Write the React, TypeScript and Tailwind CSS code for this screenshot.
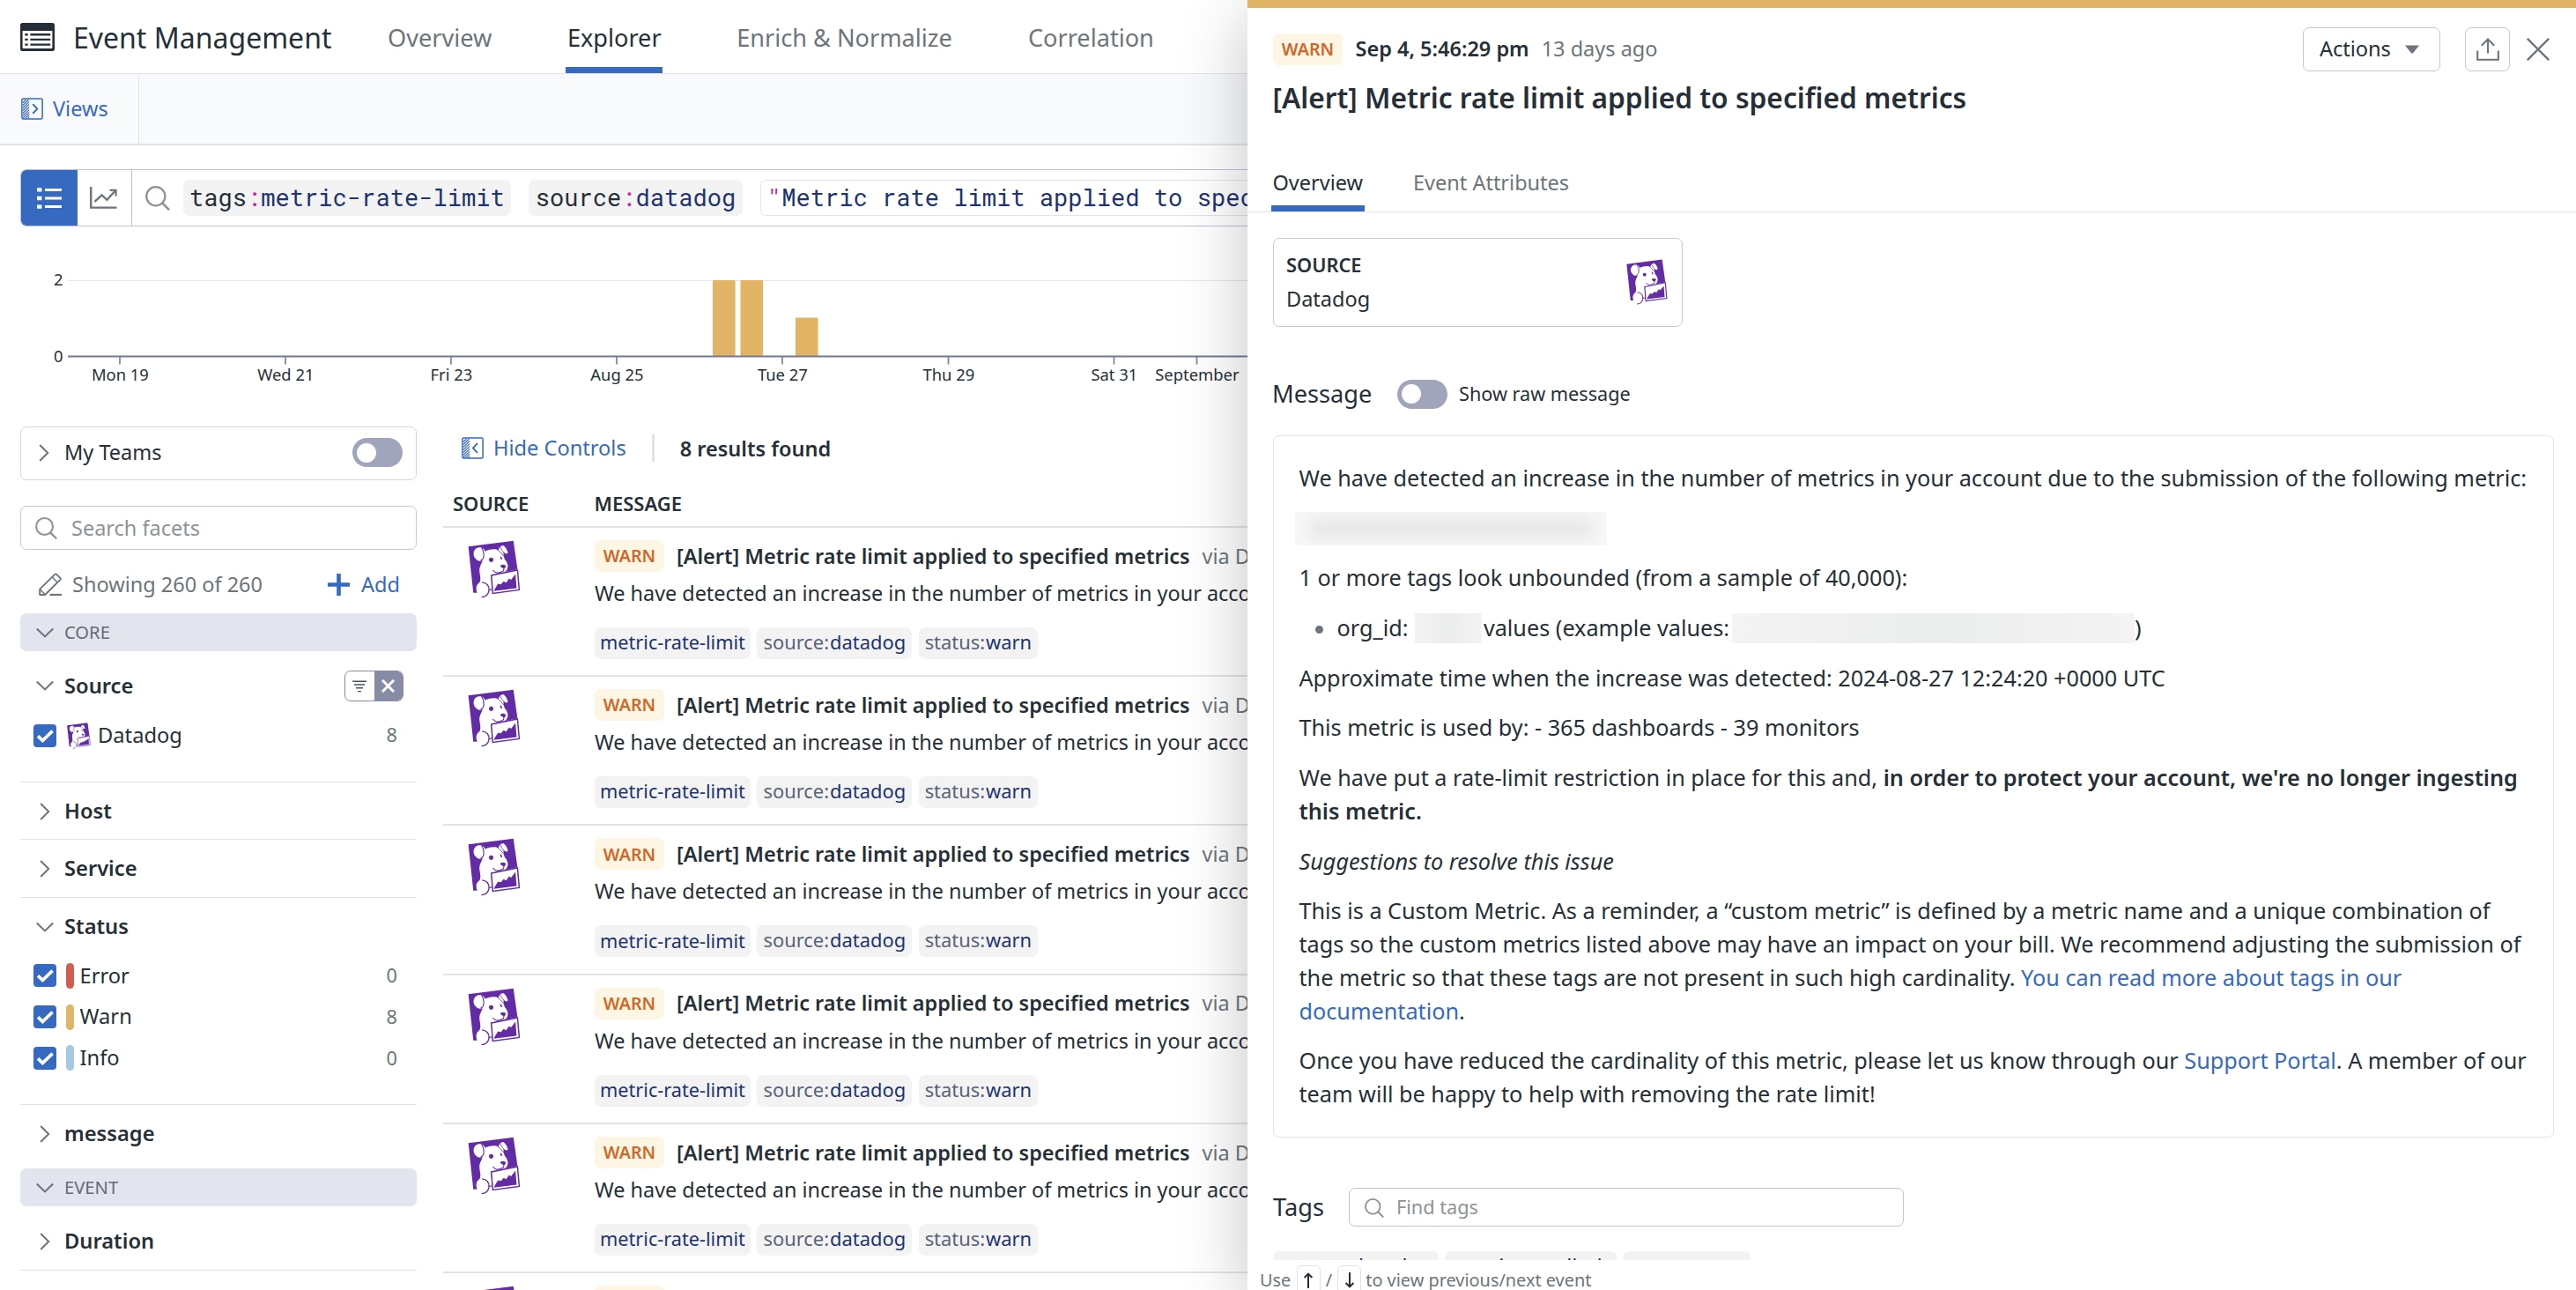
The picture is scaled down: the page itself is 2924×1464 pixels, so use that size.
import React from "react";

type IconProps = { className?: string };

const ListWindowIcon = () => (
  <svg className="h-[32px] w-[39px] shrink-0" viewBox="0 0 39 32">
    <path fillRule="evenodd" fill="#262f38" d="M2.5 0H36.5Q39 0 39 2.5V29.5Q39 32 36.5 32H2.5Q0 32 0 29.5V2.5Q0 0 2.5 0ZM2.6 9V28Q2.6 29 3.6 29H35.4Q36.4 29 36.4 28V9Z" />
    <path d="M5.3 13.2h3.4M5.3 18.9h3.4M5.3 24.6h3.4M11.4 13.2h22.8M11.4 18.9h22.8M11.4 24.6h22.8" stroke="#262f38" strokeWidth="2.4" />
  </svg>
);

const PanelIcon = ({ dir }: { dir: "left" | "right" }) => (
  <svg className="h-[25px] w-[25px] shrink-0" viewBox="0 0 25 25" fill="none" stroke="#356ac0">
    <rect x="0.9" y="0.9" width="23.2" height="23.2" rx="1.6" strokeWidth="1.5" />
    <path d="M2 5.5L5.5 2M2 8.5L8.5 2M2 11.5L9.2 4.3M2 14.5L9.2 7.3M2 17.5L9.2 10.3M2 20.5L9.2 13.3M2 23.2L9.2 16.3M4.5 23.3L9.2 19M7.3 23.3L9.2 21.6" strokeWidth="1.1" />
    <path d={dir === "right" ? "M13.2 7.2L18.3 12.5L13.2 17.8" : "M18 7.2L12.9 12.5L18 17.8"} strokeWidth="1.9" />
  </svg>
);

const SearchIcon = ({ className }: IconProps) => (
  <svg className={className} viewBox="0 0 28 28" fill="none" stroke="#8d9398">
    <circle cx="11.8" cy="11.8" r="10.6" strokeWidth="2.3" />
    <path d="M19.2 19.4L27 27.2" strokeWidth="2.6" />
  </svg>
);

const ChevronRight = () => (
  <svg className="h-5 w-5 shrink-0" viewBox="0 0 20 20" fill="none" stroke="#6c757c" strokeWidth="2">
    <path d="M5.2 1L14.2 10L5.2 19" />
  </svg>
);

const ChevronDown = () => (
  <svg className="h-5 w-5 shrink-0" viewBox="0 0 20 20" fill="none" stroke="#6c757c" strokeWidth="2.1">
    <path d="M0.8 5.4L10 14.4L19.2 5.4" />
  </svg>
);

const PencilIcon = () => (
  <svg className="h-[27px] w-[27px] shrink-0" viewBox="0 0 27 27" fill="none" stroke="#6c757c" strokeWidth="1.9" strokeLinejoin="round">
    <path d="M1.2 25V18.6L18.2 1.9Q19.2 1 20.2 1.9L24.3 5.9Q25.2 6.9 24.3 7.9L7.2 25Z" />
    <path d="M15.2 5L21.2 11M1.6 19L7 24.6" strokeWidth="1.5" />
    <path d="M12.5 25H26" strokeWidth="2.2" />
  </svg>
);

const DogLogo = ({ className }: IconProps) => (
  <svg className={className} viewBox="34 36 180 200">
    <path fill="#632ca6" d="M35 58L190 38L204 137L160 146L112 155L118 200L108 216L52 217Z" />
    <path fill="#fff" d="M53 82C54 67 65 59 78 61C86 63 91 69 93 75C99 69 104 72 108 68C113 71 118 65 123 68C129 65 134 69 138 72C140 61 147 55 155 54C164 59 170 72 171 80C168 85 162 83 156 77C155 84 157 94 160 102C167 110 171 118 171 127C170 139 163 146 151 148L112 156L118 205L108 218L66 218C59 203 62 190 74 181C80 168 73 152 73 138C73 130 77 122 80 116L84 106C75 110 67 108 62 102C55 96 53 90 53 82Z" />
    <path fill="none" stroke="#632ca6" strokeWidth="3.4" d="M80 62C87 69 88 78 88 90C88 98 85 103 77 106" />
    <path fill="none" stroke="#632ca6" strokeWidth="2.6" d="M138 72C145 76 152 86 158 92M146 61C148 68 151 74 157 78" />
    <path fill="#632ca6" d="M107 99C111 94 120 96 121 102C122 109 116 113 111 111C106 109 104 104 107 99Z" />
    <path fill="#632ca6" d="M144 91C149 92 152 98 151 103C147 104 144 98 144 91Z" />
    <path fill="#632ca6" d="M144 124Q153 118 162 122Q166 129 158 134Q150 135 144 124Z" />
    <path fill="none" stroke="#632ca6" strokeWidth="3.2" d="M157 133Q158 143 149 145Q140 150 131 148Q123 145 119 139" />
    <path fill="#fff" stroke="#632ca6" strokeWidth="4.4" d="M114 157L204 139L210 207L119 219Z" />
    <path fill="#632ca6" d="M123 211L127 202L137 186L147 188L156 178L165 182L175 168L182 172L197 153L201 201Z" />
    <path fill="#fff" d="M64 200C64 186 76 181 88 182C100 184 108 200 103 214C99 226 92 231 82 231C72 226 64 214 64 200Z" />
    <path fill="none" stroke="#632ca6" strokeWidth="4" d="M82 181C98 182 108 194 106 209C103 225 94 232 80 232" />
    <path fill="none" stroke="#632ca6" strokeWidth="3.6" d="M105 207L118 205" />
  </svg>
);

const WarnBadge = () => (
  <span className="flex h-9 w-[79px] shrink-0 items-center justify-center rounded-[7px] bg-[#fdf6e4] text-[19.7px] font-semibold text-[#cf6827]">WARN</span>
);

const Toggle = () => (
  <span className="flex h-[33px] w-[57px] shrink-0 items-center rounded-full bg-[#a0a5bb] pl-[5px]">
    <span className="h-[22px] w-[22px] rounded-full bg-white" />
  </span>
);

const Checkbox = () => (
  <span className="flex h-[26px] w-[26px] shrink-0 items-center justify-center rounded-[4px] bg-[#356ac0]">
    <svg className="h-[26px] w-[26px]" viewBox="0 0 26 26" fill="none" stroke="#fff" strokeWidth="3.6">
      <path d="M5 13.4L10.4 18.4L21.6 7.6" />
    </svg>
  </span>
);

const ticks: [number, string][] = [
  [136, "Mon 19"],
  [324, "Wed 21"],
  [512, "Fri 23"],
  [700, "Aug 25"],
  [888, "Tue 27"],
  [1076.5, "Thu 29"],
  [1264.5, "Sat 31"],
  [1358.5, "September"],
];

const bars: [number, number][] = [
  [809, 86],
  [840.5, 86],
  [903, 43.5],
];

function Timeline() {
  return (
    <svg className="mt-[43px] h-[184px] w-[1460px]" viewBox="0 300 1460 184" fontSize="18.4" fill="#262f38">
      <path d="M77 318.5H1460" stroke="#e4e5e8" strokeWidth="1.2" />
      <text x="71.5" y="324.3" textAnchor="end">2</text>
      <text x="71.5" y="410.8" textAnchor="end">0</text>
      {bars.map(([x, h]) => (
        <rect key={x} x={x} y={404 - h} width="25.6" height={h} fill="#e2b566" />
      ))}
      <path d="M77 404.5H1460" stroke="#737995" strokeWidth="2.2" />
      {ticks.map(([x, label]) => (
        <g key={label}>
          <path d={`M${x} 405V413.5`} stroke="#8388a2" strokeWidth="1.8" />
          <text x={x + 0.4} y="432.3" textAnchor="middle">{label}</text>
        </g>
      ))}
    </svg>
  );
}

const GroupBar = ({ label }: { label: string }) => (
  <div className="flex h-[43px] items-center rounded-[7px] bg-[#e2e5ed] pl-[18px] text-[20.2px] text-[#636b73]">
    <ChevronDown />
    <span className="ml-3">{label}</span>
  </div>
);

const Facet = ({ label, open, className }: { label: string; open?: boolean; className: string }) => (
  <div className={`flex items-center pl-[18px] text-[23.7px] font-semibold ${className}`}>
    {open ? <ChevronDown /> : <ChevronRight />}
    <span className="ml-3">{label}</span>
  </div>
);

const statuses: [string, string, number][] = [
  ["Error", "bg-[#d15f50]", 0],
  ["Warn", "bg-[#e2b566]", 8],
  ["Info", "bg-[#a5c9e1]", 0],
];

function Sidebar() {
  return (
    <aside className="ml-[23px] w-[450px] shrink-0">
      <div className="flex h-[61px] items-center rounded-[7px] border border-[#d3d5e6] pb-[2px] pl-4">
        <ChevronRight />
        <span className="ml-[13px] flex-1 text-[23.5px]">My Teams</span>
        <span className="mr-[15px]"><Toggle /></span>
      </div>
      <div className="mt-[29px] flex h-[50px] items-center rounded-[7px] border border-[#c5c9dc] pt-px pl-4">
        <SearchIcon className="h-[25px] w-[25px] shrink-0" />
        <span className="ml-4 text-[23.5px] text-[#8d9398]">Search facets</span>
      </div>
      <div className="flex h-[72px] items-center pt-[7px] text-[23.5px]">
        <span className="ml-[21px]"><PencilIcon /></span>
        <span className="ml-[11px] flex-1 text-[#6c757c]">Showing 260 of 260</span>
        <svg className="h-[25px] w-[25px]" viewBox="0 0 25 25" stroke="#356ac0" strokeWidth="4.6">
          <path d="M12.5 0V25M0 12.5H25" />
        </svg>
        <span className="mr-[19px] ml-[13px] text-[#356ac0]">Add</span>
      </div>
      <GroupBar label="CORE" />
      <div className="flex h-[79px] items-center">
        <Facet label="Source" open className="flex-1" />
        <div className="mr-[15px] flex h-[35px] w-[67px] overflow-hidden rounded-[7px] border border-[#878ba5]">
          <span className="flex flex-1 items-center justify-center">
            <svg className="h-4 w-4" viewBox="0 0 16 16" stroke="#4a535c" strokeWidth="1.4">
              <path d="M0 2.2H16M2 6H14M4 9.8H12M6 13.6H10" />
            </svg>
          </span>
          <span className="flex flex-1 items-center justify-center bg-[#878ba5]">
            <svg className="h-[15px] w-[15px]" viewBox="0 0 15 15" stroke="#fff" strokeWidth="3">
              <path d="M1 1L14 14M14 1L1 14" />
            </svg>
          </span>
        </div>
      </div>
      <div className="flex h-[33px] items-center pl-[15px]">
        <Checkbox />
        <DogLogo className="ml-3 h-[30px] w-[27px]" />
        <span className="ml-[8px] flex-1 text-[23.7px]">Datadog</span>
        <span className="mr-[22px] text-[21.7px] text-[#6c757c]">8</span>
      </div>
      <div className="mt-[36px] border-t border-[#e1e3ea]" />
      <Facet label="Host" className="h-[65px] border-b border-[#e1e3ea] pt-px" />
      <Facet label="Service" className="h-[66px] border-b border-[#e1e3ea]" />
      <Facet label="Status" open className="h-[65px]" />
      {statuses.map(([label, color, count]) => (
        <div key={label} className="flex h-[46.8px] items-center pl-[15px]">
          <Checkbox />
          <span className={`ml-[11px] h-[29px] w-[9px] rounded-full ${color}`} />
          <span className="ml-[6.5px] flex-1 text-[23.7px]">{label}</span>
          <span className="mr-[22px] text-[21.7px] text-[#6c757c]">{count}</span>
        </div>
      ))}
      <div className="mt-[28.7px] border-t border-[#e1e3ea]" />
      <Facet label="message" className="mb-2 h-[64px] pt-px" />
      <GroupBar label="EVENT" />
      <Facet label="Duration" className="h-[73px] border-b border-[#e1e3ea] pt-[7px]" />
    </aside>
  );
}

const Chip = ({ k, v, className }: { k?: string; v: string; className: string }) => (
  <span className={`flex items-center rounded-[7px] bg-[#f3f3f4] text-[#1d3372] ${className}`}>
    {k && <span className="mr-px text-[#596278]">{k}:</span>}
    <span>{v}</span>
  </span>
);

const EventRow = () => (
  <div className="flex h-[169.2px] shrink-0 border-b-2 border-[#e1e3ea] pt-[14px]">
    <div className="w-[172px] shrink-0 pl-7">
      <DogLogo className="h-[66px] w-[60px]" />
    </div>
    <div className="text-[23.45px] whitespace-nowrap">
      <div className="flex h-9 items-center">
        <WarnBadge />
        <span className="ml-[14px] pt-px font-semibold">[Alert] Metric rate limit applied to specified metrics</span>
        <span className="ml-[14px] pt-px text-[#6c757c]">via Datadog</span>
      </div>
      <div className="mt-[6px] text-[23.4px] leading-9">We have detected an increase in the number of metrics in your account due to the submission</div>
      <div className="mt-[21px] flex gap-[7.5px] text-[21.9px]">
        <Chip v="metric-rate-limit" className="h-9 px-[6px] pb-px text-[21.7px]" />
        <Chip k="source" v="datadog" className="h-9 px-[7px] pb-px" />
        <Chip k="status" v="warn" className="h-9 px-[7px] pb-px" />
      </div>
    </div>
  </div>
);

function Results() {
  return (
    <section className="ml-[30px] flex-1">
      <div className="flex h-[49px] items-center text-[23.5px]">
        <span className="ml-[21px]"><PanelIcon dir="left" /></span>
        <span className="ml-[11px] text-[23.6px] text-[#356ac0]">Hide Controls</span>
        <span className="ml-[29px] h-[31px] w-[3px] bg-[#e1e3ea]" />
        <span className="ml-[29px] pt-[2px] font-semibold">8 results found</span>
      </div>
      <div className="flex h-[66px] items-center border-b-2 border-[#e1e3ea] pt-[13px] text-[22px] font-semibold">
        <span className="w-[171.5px] pl-[11px]">SOURCE</span>
        <span>MESSAGE</span>
      </div>
      {[0, 1, 2, 3, 4, 5].map((i) => (
        <EventRow key={i} />
      ))}
    </section>
  );
}

function Explorer() {
  return (
    <main className="h-[1464px] w-[2924px] overflow-hidden">
      <header className="flex h-[84px] items-center border-b border-[#e1e3ee] pl-[23px]">
        <ListWindowIcon />
        <h1 className="ml-[21px] pt-[2px] text-[32px]">Event Management</h1>
        <nav className="ml-[63.5px] flex h-[83px] text-[27.15px] text-[#6c757c]">
          <span className="flex items-center pt-[3px]">Overview</span>
          <span className="ml-[84px] flex items-center border-b-[7px] border-[#356ac0] px-[1.5px] pt-[10px] text-[#262f38]">Explorer</span>
          <span className="ml-[84px] flex items-center pt-[3px]">Enrich &amp; Normalize</span>
          <span className="ml-[86px] flex items-center pt-[3px]">Correlation</span>
        </nav>
      </header>
      <div className="h-[81px] border-b-2 border-[#e1e3ea] bg-[#f9fafc]">
        <div className="flex h-[79px] w-[157.5px] items-center border-r-[1.5px] border-[#dfe2ec] pl-6 text-[23.5px] text-[#356ac0]">
          <PanelIcon dir="right" />
          <span className="ml-[11px]">Views</span>
        </div>
      </div>
      <div className="mt-[27px] ml-[23px] flex h-[65px] w-[2877px] items-center overflow-hidden rounded-[7px] border border-[#bcc1d9]">
        <span className="-my-px -ml-px flex h-[65px] w-[65px] items-center justify-center bg-[#356ac0]">
          <svg className="h-[24px] w-[28px]" viewBox="0 0 28 24" stroke="#fff" fill="none">
            <path d="M0 2.4H5.4M0 12H5.4M0 21.6H5.4" strokeWidth="4.4" />
            <path d="M9 2.4H28M9 12H28M9 21.6H28" strokeWidth="3" />
          </svg>
        </span>
        <span className="flex h-full w-[62px] items-center justify-center border-r border-[#bcc1d9] pr-[2px]">
          <svg className="mt-px h-[26px] w-[31px]" viewBox="0 0 31 26" stroke="#6c757c" fill="none">
            <path d="M1.2 0V23.6H30.5" strokeWidth="2.4" />
            <path d="M5.4 16.8L13.6 9.4L19.4 14.8L28.4 5" strokeWidth="2.4" />
            <path d="M22.6 3.8H29.6V10.6" strokeWidth="2.2" />
          </svg>
        </span>
        <SearchIcon className="ml-[15px] h-7 w-7 shrink-0" />
        <div className="ml-[14.5px] flex h-[41px] gap-5 font-['Roboto_Mono','Liberation_Mono',monospace] text-[27.1px] text-[#1d3372]">
          <span className="flex items-center rounded-[7px] bg-[#f3f3f4] px-[7.5px]">
            <span className="text-[#262f38]">tags</span><span className="text-[#c22ca2]">:</span><span>metric-rate-limit</span>
          </span>
          <span className="flex items-center rounded-[7px] bg-[#f3f3f4] px-[7.5px]">
            <span className="text-[#262f38]">source</span><span className="text-[#c22ca2]">:</span><span>datadog</span>
          </span>
          <span className="flex items-center rounded-[7px] border border-[#e1e3ee] px-[7px] whitespace-nowrap">
            <span className="text-[#c22ca2]">"</span><span>Metric rate limit applied to specified metrics</span><span className="text-[#c22ca2]">"</span>
          </span>
        </div>
      </div>
      <Timeline />
      <div className="flex">
        <Sidebar />
        <Results />
      </div>
    </main>
  );
}

const Redacted = ({ className }: IconProps) => (
  <span className={`inline-block bg-linear-to-r from-[#f4f4f4] via-[#ebecec] to-[#f4f4f4] ${className}`} />
);

function MessageBody() {
  return (
    <div className="mt-[22px] flex h-[797px] w-[1454px] flex-col gap-[18.9px] rounded-[7px] border border-[#e1e4ee] pt-[29px] pl-[28.5px] text-[25.22px] leading-[37.8px] whitespace-nowrap">
      <p>We have detected an increase in the number of metrics in your account due to the submission of the following metric:</p>
      <div className="-ml-[5px] flex h-[37.7px] items-center">
        <span className="flex h-[38px] w-[354px] items-center justify-center overflow-hidden bg-[#f7f7f7]">
          <span className="h-[24px] w-[322px] bg-[#e7e8e8] blur-[8px]" />
        </span>
      </div>
      <p>1 or more tags look unbounded (from a sample of 40,000):</p>
      <div className="flex items-center pl-[18px]">
        <span className="mt-[3px] h-[9px] w-[9px] rounded-full bg-[#6c757c]" />
        <span className="ml-[16px]">org_id:</span>
        <Redacted className="ml-[8px] h-[34px] w-[76px]" />
        <span className="ml-[1.5px]">values (example values:</span>
        <Redacted className="ml-[3px] h-[34px] w-[457px]" />
        <span>)</span>
      </div>
      <p>Approximate time when the increase was detected: 2024-08-27 12:24:20 +0000 UTC</p>
      <p>This metric is used by: - 365 dashboards - 39 monitors</p>
      <p>
        We have put a rate-limit restriction in place for this and, <strong className="font-semibold">in order to protect your account, we're no longer ingesting<br />this metric.</strong>
      </p>
      <p className="italic">Suggestions to resolve this issue</p>
      <p>
        This is a Custom Metric. As a reminder, a “custom metric” is defined by a metric name and a unique combination of<br />
        tags so the custom metrics listed above may have an impact on your bill. We recommend adjusting the submission of<br />
        the metric so that these tags are not present in such high cardinality. <a className="text-[#356ac0]">You can read more about tags in our<br />documentation</a>.
      </p>
      <p>
        Once you have reduced the cardinality of this metric, please let us know through our <a className="text-[#356ac0]">Support Portal</a>. A member of our<br />
        team will be happy to help with removing the rate limit!
      </p>
    </div>
  );
}

const Key = ({ d }: { d: string }) => (
  <span className="flex h-[33px] w-[27px] items-center justify-center rounded-[6px] border border-[#dfe2ec]">
    <svg className="h-[18px] w-[12px]" viewBox="0 0 12 18" fill="none" stroke="#262f38" strokeWidth="2">
      <path d={d} />
    </svg>
  </span>
);

function DetailPanel() {
  return (
    <aside className="absolute top-0 right-0 flex h-[1464px] w-[1508px] flex-col border-t-[9px] border-[#e2b566] bg-white shadow-[0_18px_72px_rgba(0,0,0,0.24)]">
      <div className="mt-[22px] flex h-[50px] items-center pl-[29px] text-[23.5px]">
        <WarnBadge />
        <span className="ml-[14.5px] font-semibold">Sep 4, 5:46:29 pm</span>
        <span className="ml-[14px] flex-1 text-[#6c757c]">13 days ago</span>
        <span className="flex h-[50px] w-[156px] items-center rounded-[7px] border border-[#c3c6df] pl-[18px]">
          Actions
          <svg className="ml-4 h-[10px] w-4" viewBox="0 0 16 10" fill="#6c757c">
            <path d="M0 0.4H16L9.2 9Q8 10.2 6.8 9Z" />
          </svg>
        </span>
        <span className="ml-[28px] flex h-[50px] w-[51px] items-center justify-center rounded-[7px] border border-[#c3c6df]">
          <svg className="h-[26px] w-[26px]" viewBox="0 0 26 26" fill="none" stroke="#6c757c" strokeWidth="2.1">
            <path d="M1.2 14.5V24.8H24.8V14.5M13 17.5V1.8M5.8 8.8L13 1.6L20.2 8.8" />
          </svg>
        </span>
        <svg className="mr-[30px] ml-[19px] h-[26px] w-[26px]" viewBox="0 0 26 26" stroke="#6c757c" strokeWidth="2.4">
          <path d="M0.8 0.8L25.2 25.2M25.2 0.8L0.8 25.2" />
        </svg>
      </div>
      <h2 className="flex h-[59px] items-center pl-[28.5px] text-[31.7px] font-semibold">[Alert] Metric rate limit applied to specified metrics</h2>
      <div className="flex h-[101px] items-end border-b border-[#e1e3ee] pl-[27px] text-[23.5px]">
        <span className="flex h-[66px] items-center border-b-[7px] border-[#356ac0] px-[1.5px] pt-[8px]">Overview</span>
        <span className="ml-[55.5px] flex h-[66px] items-center pt-px text-[#6c757c]">Event Attributes</span>
      </div>
      <div className="flex-1 overflow-hidden pl-[29px]">
        <div className="mt-[29px] flex h-[101px] w-[465px] items-center rounded-[7px] border border-[#c5c9dc] pr-4 pb-[2px] pl-[14px]">
          <div className="flex-1">
            <div className="text-[21.8px] leading-[39px] font-semibold">SOURCE</div>
            <div className="text-[23.5px] leading-[39px]">Datadog</div>
          </div>
          <DogLogo className="h-[52px] w-[47px]" />
        </div>
        <div className="mt-[51px] flex h-[50px] items-center">
          <span className="-ml-px w-[142px] text-[27.2px]">Message</span>
          <Toggle />
          <span className="ml-[13px] text-[21.65px]">Show raw message</span>
        </div>
        <MessageBody />
        <div className="mt-[57px] flex h-[44px] items-center">
          <span className="w-[86px] pt-px text-[27.2px]">Tags</span>
          <span className="flex h-[44px] w-[630px] items-center rounded-[7px] border border-[#bfc3da] pt-px pl-[17px] text-[21.7px] text-[#8d9398]">
            <SearchIcon className="h-[22px] w-[22px]" />
            <span className="ml-[14px]">Find tags</span>
          </span>
        </div>
        <div className="mt-7 flex gap-[7px] text-[23.6px]">
          <Chip k="source" v="datadog" className="h-[35px] px-[7px] pt-px" />
          <Chip v="metric-rate-limit" className="h-[35px] px-[7.5px] pt-px" />
          <Chip k="status" v="warn" className="h-[35px] px-[7px] pt-px" />
        </div>
      </div>
      <div className="h-[34px] overflow-hidden bg-white pt-[6px]">
        <div className="flex h-[33px] items-center pl-[14px] text-[19.9px] text-[#6c757c]">
          <span className="mr-[6.5px]">Use</span>
          <Key d="M6 18V2.4M1.6 6L6 1.6L10.4 6" />
          <span className="mx-[6px]">/</span>
          <Key d="M6 0V15.6M1.6 12L6 16.4L10.4 12" />
          <span className="ml-[5px]">to view previous/next event</span>
        </div>
      </div>
    </aside>
  );
}

export default function App() {
  return (
    <div className="relative h-[1464px] w-[2924px] overflow-hidden bg-white font-['Noto_Sans',sans-serif] text-[#262f38]">
      <Explorer />
      <DetailPanel />
    </div>
  );
}
